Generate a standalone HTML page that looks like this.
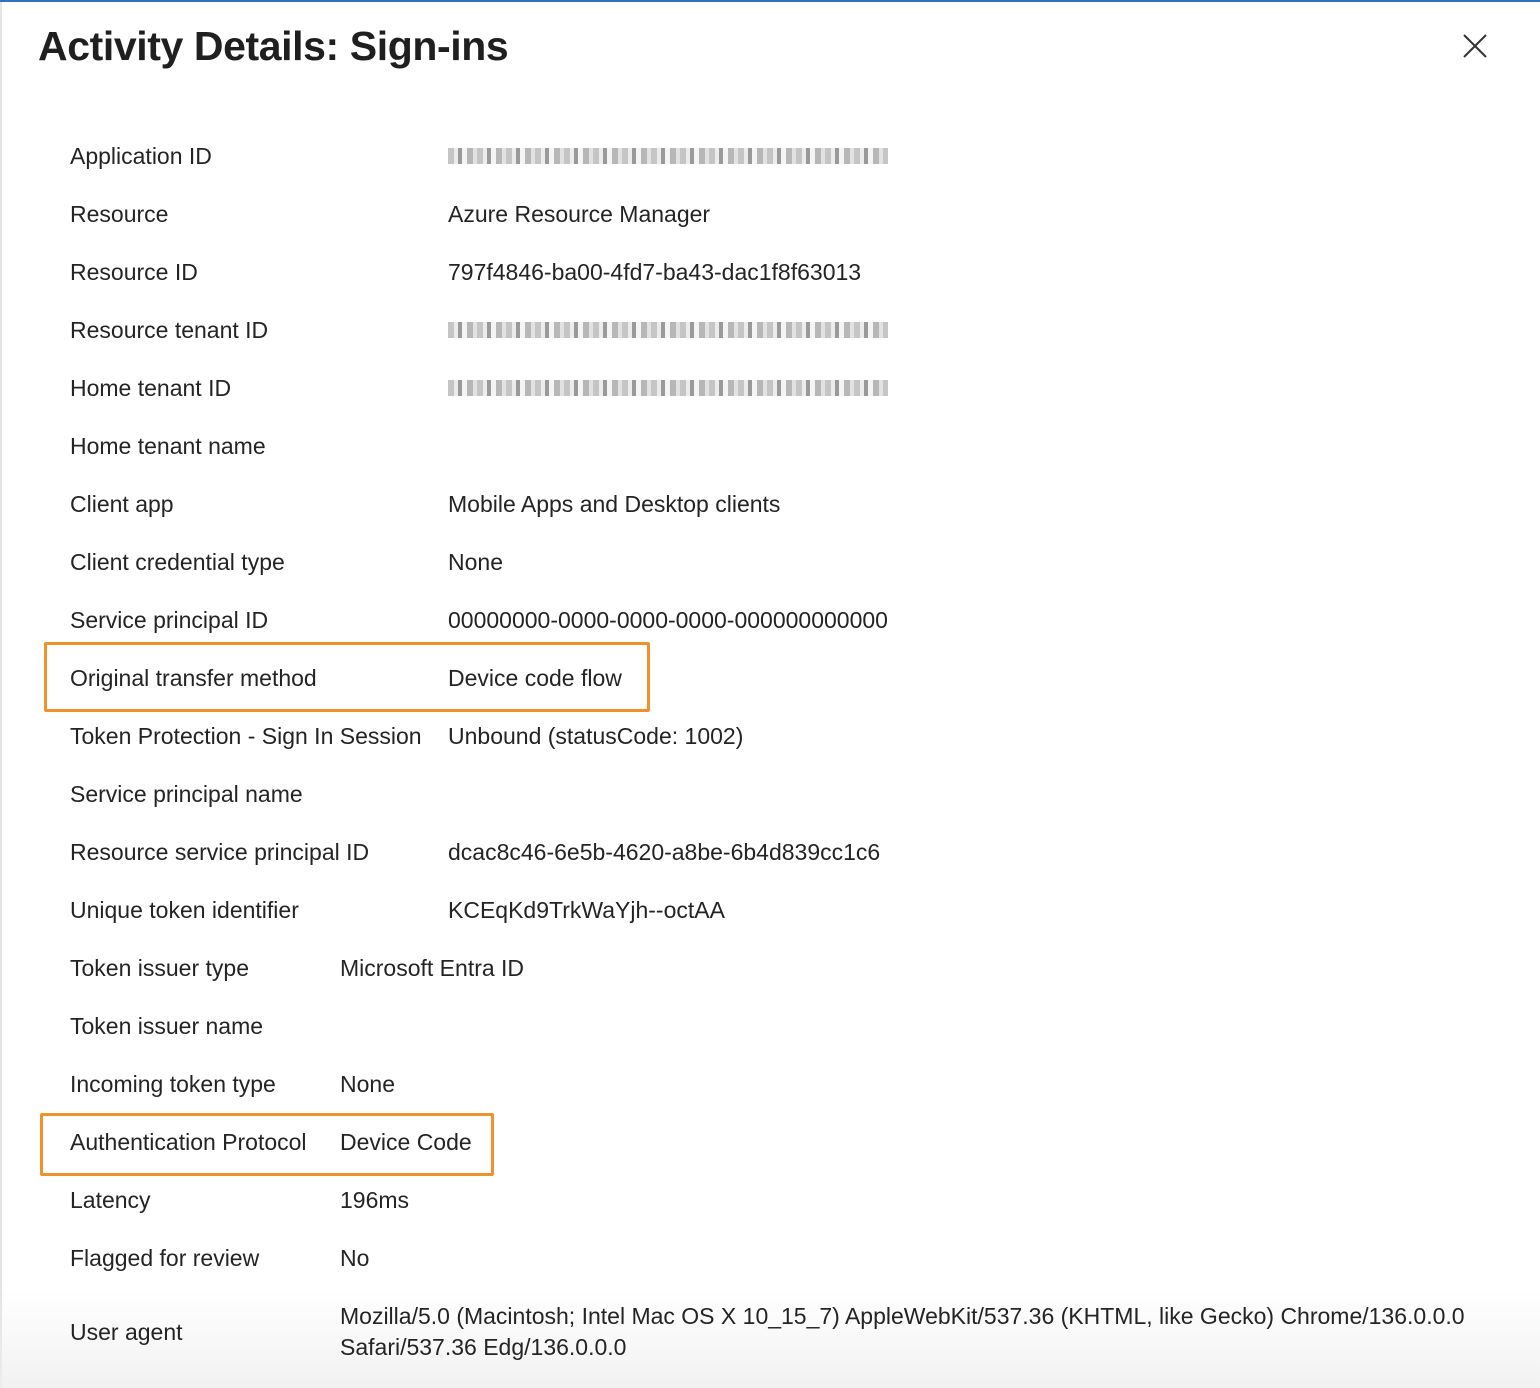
<!DOCTYPE html>
<html><head><style>
body{margin:0;width:1540px;height:1388px;overflow:hidden;background:#fff;font-family:"Liberation Sans",sans-serif;color:#242424;position:relative}
.top{position:absolute;left:0;top:0;width:1540px;height:2px;background:#2f72c4}
.lb{position:absolute;left:0;top:2px;width:2px;height:1386px;background:#e4e4e4}
h1{position:absolute;left:38px;top:20px;margin:0;font-size:41px;font-weight:bold;letter-spacing:-0.4px;color:#1f1f1f;line-height:52px}
.x{position:absolute;left:1462px;top:33px}
.r{position:absolute;left:70px;font-size:23px;line-height:30px;white-space:nowrap}
.v{position:absolute;font-size:23px;line-height:30px;white-space:nowrap}
.blur{position:absolute;left:448px;width:440px;height:16px;background:repeating-linear-gradient(90deg,#bbb 0 6px,#e8e8e8 6px 10px,#888 10px 14px,#f2f2f2 14px 19px,#aaa 19px 25px,#ddd 25px 29px);opacity:.85}
.box{position:absolute;border:3px solid #f0922b;border-radius:2px}
.fade{position:absolute;left:0;top:1290px;width:1540px;height:98px;background:linear-gradient(180deg,rgba(240,240,240,0),rgba(238,238,238,.8))}
</style></head><body>
<div class="top"></div><div class="lb"></div>
<div class="fade"></div>
<h1>Activity Details: Sign-ins</h1>
<svg class="x" width="26" height="26" viewBox="0 0 26 26"><path d="M2 2L24 24M24 2L2 24" stroke="#333" stroke-width="2" fill="none"/></svg>

<div class="r" style="top:141px">Application ID</div><div class="blur" style="top:148px"></div>
<div class="r" style="top:199px">Resource</div><div class="v" style="left:448px;top:199px">Azure Resource Manager</div>
<div class="r" style="top:257px">Resource ID</div><div class="v" style="left:448px;top:257px">797f4846-ba00-4fd7-ba43-dac1f8f63013</div>
<div class="r" style="top:315px">Resource tenant ID</div><div class="blur" style="top:322px"></div>
<div class="r" style="top:373px">Home tenant ID</div><div class="blur" style="top:380px"></div>
<div class="r" style="top:431px">Home tenant name</div>
<div class="r" style="top:489px">Client app</div><div class="v" style="left:448px;top:489px">Mobile Apps and Desktop clients</div>
<div class="r" style="top:547px">Client credential type</div><div class="v" style="left:448px;top:547px">None</div>
<div class="r" style="top:605px">Service principal ID</div><div class="v" style="left:448px;top:605px">00000000-0000-0000-0000-000000000000</div>
<div class="r" style="top:663px">Original transfer method</div><div class="v" style="left:448px;top:663px">Device code flow</div>
<div class="r" style="top:721px">Token Protection - Sign In Session</div><div class="v" style="left:448px;top:721px">Unbound (statusCode: 1002)</div>
<div class="r" style="top:779px">Service principal name</div>
<div class="r" style="top:837px">Resource service principal ID</div><div class="v" style="left:448px;top:837px">dcac8c46-6e5b-4620-a8be-6b4d839cc1c6</div>
<div class="r" style="top:895px">Unique token identifier</div><div class="v" style="left:448px;top:895px">KCEqKd9TrkWaYjh--octAA</div>
<div class="r" style="top:953px">Token issuer type</div><div class="v" style="left:340px;top:953px">Microsoft Entra ID</div>
<div class="r" style="top:1011px">Token issuer name</div>
<div class="r" style="top:1069px">Incoming token type</div><div class="v" style="left:340px;top:1069px">None</div>
<div class="r" style="top:1127px">Authentication Protocol</div><div class="v" style="left:340px;top:1127px">Device Code</div>
<div class="r" style="top:1185px">Latency</div><div class="v" style="left:340px;top:1185px">196ms</div>
<div class="r" style="top:1243px">Flagged for review</div><div class="v" style="left:340px;top:1243px">No</div>
<div class="r" style="top:1317px">User agent</div>
<div class="v" style="left:340px;top:1301px">Mozilla/5.0 (Macintosh; Intel Mac OS X 10_15_7) AppleWebKit/537.36 (KHTML, like Gecko) Chrome/136.0.0.0</div>
<div class="v" style="left:340px;top:1332px">Safari/537.36 Edg/136.0.0.0</div>

<div class="box" style="left:44px;top:642px;width:600px;height:64px"></div>
<div class="box" style="left:40px;top:1113px;width:448px;height:57px"></div>
</body></html>
